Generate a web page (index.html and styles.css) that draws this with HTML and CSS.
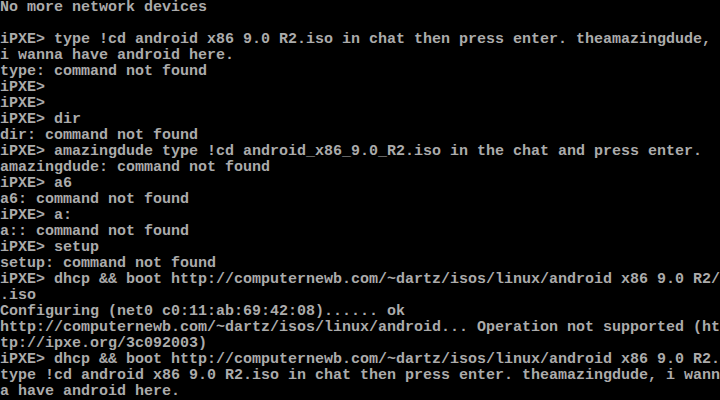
FILE: index.html
```html
<!DOCTYPE html>
<html>
<head>
<meta charset="utf-8">
<link rel="stylesheet" href="styles.css">
</head>
<body>
<pre class="console">No more network devices

iPXE&gt; type !cd android x86 9.0 R2.iso in chat then press enter. theamazingdude,
i wanna have android here.
type: command not found
iPXE&gt;
iPXE&gt;
iPXE&gt; dir
dir: command not found
iPXE&gt; amazingdude type !cd android_x86_9.0_R2.iso in the chat and press enter.
amazingdude: command not found
iPXE&gt; a6
a6: command not found
iPXE&gt; a:
a:: command not found
iPXE&gt; setup
setup: command not found
iPXE&gt; dhcp &amp;&amp; boot http://computernewb.com/~dartz/isos/linux/android x86 9.0 R2/
.iso
Configuring (net0 c0:11:ab:69:42:08)...... ok
http://computernewb.com/~dartz/isos/linux/android... Operation not supported (ht
tp://ipxe.org/3c092003)
iPXE&gt; dhcp &amp;&amp; boot http://computernewb.com/~dartz/isos/linux/android x86 9.0 R2.
type !cd android x86 9.0 R2.iso in chat then press enter. theamazingdude, i wann
a have android here.</pre>
</body>
</html>
```
FILE: styles.css
```css
html, body {
  margin: 0;
  padding: 0;
  background: #000;
  width: 720px;
  height: 400px;
  overflow: hidden;
}
.console {
  margin: 0;
  padding: 0;
  color: #ababab;
  font-family: "Liberation Mono", "DejaVu Sans Mono", monospace;
  font-size: 15px;
  line-height: 16px;
  font-weight: bold;
  white-space: pre;
}
```
